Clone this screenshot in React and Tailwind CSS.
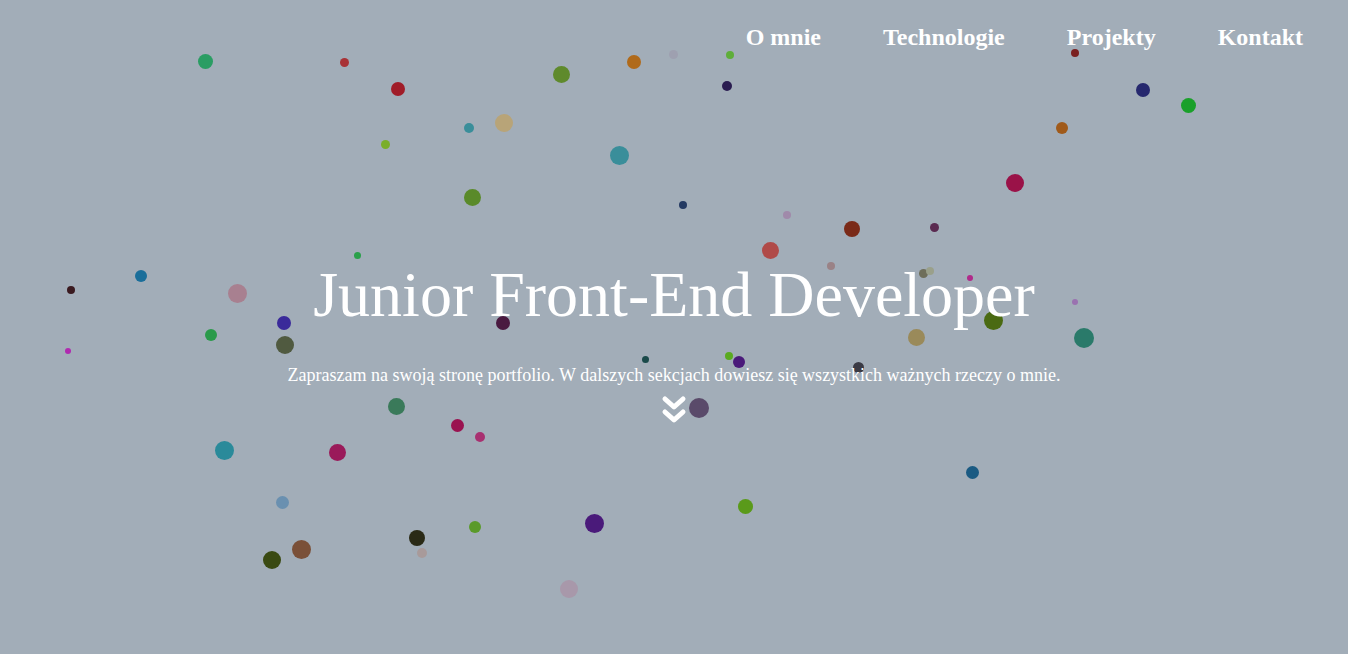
import React from "react";

// background bubbles: [x, y, diameter, colour]
const dots = [
  [205, 61, 15, "#2a9d63"], [344, 62, 9, "#a83236"], [398, 89, 14, "#a01c28"],
  [561, 74, 17, "#5f8a2c"], [634, 62, 14, "#b06a1a"], [673, 54, 9, "#9ea0b0"],
  [730, 55, 8, "#5fae3a"], [727, 86, 10, "#2a1c50"], [385, 144, 9, "#7aae2a"],
  [469, 128, 10, "#3a8e9a"], [504, 123, 18, "#b8a478"], [619, 155, 19, "#3a8e9a"],
  [472, 197, 17, "#5a8a2a"], [683, 205, 8, "#243a62"], [1075, 53, 8, "#7a2020"],
  [1143, 90, 14, "#26286e"], [1188, 105, 15, "#1aa02a"], [1062, 128, 12, "#a05a1a"],
  [1015, 183, 18, "#9a1248"], [787, 215, 8, "#a08aaa"], [852, 229, 16, "#7a2a18"],
  [934, 227, 9, "#5a2a50"], [770, 250, 17, "#b04a48"], [831, 266, 8, "#9a8286"],
  [923, 273, 9, "#6e6e5a"], [930, 271, 8, "#9aa08a"], [970, 278, 6, "#b02a8a"],
  [1075, 302, 6, "#9a72b0"], [993, 320, 19, "#4a6a12"], [916, 337, 17, "#9a8a5a"],
  [1084, 338, 20, "#2a7a6a"], [357, 255, 7, "#2aa04a"], [141, 276, 12, "#1a6e9a"],
  [71, 290, 8, "#3a1a20"], [237, 293, 19, "#a88090"], [284, 323, 14, "#3a2a9a"],
  [211, 335, 12, "#2a9a4a"], [285, 345, 18, "#505a40"], [68, 351, 6, "#b02ab0"],
  [503, 323, 14, "#4a1a40"], [396, 406, 17, "#3a7a5a"], [457, 425, 13, "#9a1250"],
  [480, 437, 10, "#a83070"], [224, 450, 19, "#2a8a9a"], [337, 452, 17, "#9a1a5a"],
  [282, 502, 13, "#6a90b0"], [272, 560, 18, "#3a4a12"], [301, 549, 19, "#7a5038"],
  [417, 538, 16, "#2a2a16"], [422, 553, 10, "#a89a9a"], [475, 527, 12, "#5a9a2a"],
  [594, 523, 19, "#4a1a7a"], [569, 589, 18, "#a898aa"], [745, 506, 15, "#5a9a1a"],
  [972, 472, 13, "#1a5a82"], [645, 359, 7, "#1a4a4a"], [729, 356, 8, "#5aaa20"],
  [739, 362, 12, "#4a1a7a"], [858, 367, 11, "#3a3a44"], [699, 408, 20, "#5a4a6a"],
];

const links = ["O mnie", "Technologie", "Projekty", "Kontakt"];

const App = () => {
  return (
    <div className="relative h-screen overflow-hidden bg-[#a2adb8] font-['Liberation_Serif','Times_New_Roman',serif] text-white">
      <div className="absolute inset-0">
        {dots.map(([x, y, d, c], i) => (
          <span
            key={i}
            className="absolute rounded-full"
            style={{ left: x - d / 2, top: y - d / 2, width: d, height: d, background: c }}
          />
        ))}
      </div>

      <nav className="relative flex justify-end gap-[62px] pr-[45px] pt-[21px]">
        {links.map((l) => (
          <a key={l} href="#" className="text-[24px] font-bold leading-[32px]">{l}</a>
        ))}
      </nav>

      <main className="relative flex flex-col items-center pt-[205px]">
        <h1 className="text-[64px] leading-[74px] font-normal">Junior Front-End Developer</h1>
        <p className="mt-[33px] text-[18px] leading-[21px]">
          Zapraszam na swoją stronę portfolio. W dalszych sekcjach dowiesz się wszystkich ważnych rzeczy o mnie.
        </p>
        <svg className="mt-[8px]" width="26" height="32" viewBox="0 0 26 32" fill="none" stroke="white" strokeWidth="5" strokeLinecap="round" strokeLinejoin="round">
          <path d="M4 5 L13 13 L22 5" />
          <path d="M4 18 L13 26 L22 18" />
        </svg>
      </main>
    </div>
  );
};

export default App;
